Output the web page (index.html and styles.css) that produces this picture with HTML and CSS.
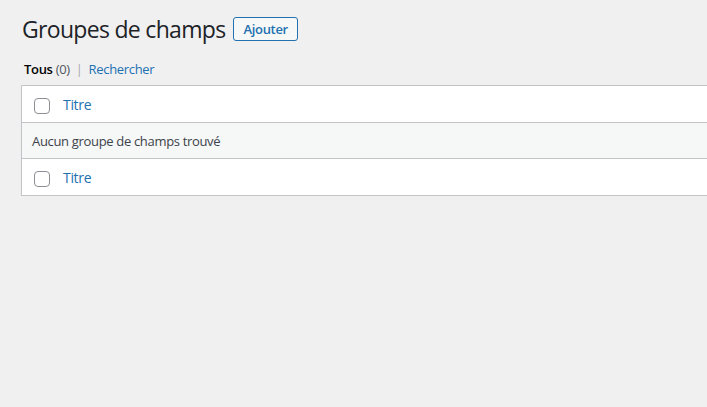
FILE: index.html
```html
<!DOCTYPE html>
<html lang="fr">
<head>
<meta charset="utf-8">
<title>Groupes de champs</title>
<link rel="stylesheet" href="styles.css">
</head>
<body>
<div class="wrap">
  <div class="heading">
    <h1 class="title">Groupes de champs</h1>
    <a class="add-btn" href="#">Ajouter</a>
  </div>
  <ul class="subsubsub">
    <li><a class="current" href="#">Tous <span class="count">(0)</span></a></li>
    <li class="sep">|</li>
    <li><a href="#">Rechercher</a></li>
  </ul>
  <div class="list-table">
    <div class="row head">
      <span class="cb"></span>
      <a class="col-title" href="#">Titre</a>
    </div>
    <div class="row empty">Aucun groupe de champs trouvé</div>
    <div class="row foot">
      <span class="cb"></span>
      <a class="col-title" href="#">Titre</a>
    </div>
  </div>
</div>
</body>
</html>
```
FILE: styles.css
```css
html, body {
  margin: 0;
  padding: 0;
  overflow: hidden;
  background: #f0f0f1;
  font-family: "Open Sans", "Noto Sans", sans-serif;
  letter-spacing: -0.025em;
  color: #3c434a;
  font-size: 13px;
}
.wrap {
  margin: 10px 0 0 22px;
}
.heading {
  display: flex;
  align-items: center;
  padding: 4px 0 4px;
}
.title {
  margin: 0;
  font-size: 23px;
  font-weight: 400;
  line-height: 30px;
  color: #1d2327;
  letter-spacing: -0.03em;
}
.add-btn {
  margin-left: 8px;
  border: 1px solid #2271b1;
  border-radius: 3px;
  background: #f6f7f7;
  color: #2271b1;
  font-size: 13px;
  font-weight: 600;
  line-height: 22px;
  padding: 0 9px;
  text-decoration: none;
}
.subsubsub {
  list-style: none;
  display: flex;
  gap: 6px;
  margin: 8px 0 0 2px;
  padding: 0;
  font-size: 13px;
  line-height: 26px;
  color: #646970;
}
.subsubsub a {
  color: #2271b1;
  text-decoration: none;
}
.subsubsub a.current {
  color: #000;
  font-weight: 600;
}
.subsubsub .count {
  color: #50575e;
  font-weight: 400;
}
.sep {
  color: #a7aaad;
}
.list-table {
  margin-top: 3px;
  margin-left: -1px;
  width: 720px;
  background: #fff;
  border: 1px solid #c3c4c7;
  box-shadow: 0 1px 1px rgba(0,0,0,0.04);
}
.row {
  display: flex;
  align-items: center;
  box-sizing: border-box;
}
.row.head {
  height: 37px;
  border-bottom: 1px solid #c3c4c7;
}
.row.foot {
  height: 37px;
  border-top: 1px solid #c3c4c7;
}
.row.empty {
  height: 35px;
  background: #f6f7f7;
  padding-left: 10px;
  color: #3c434a;
  font-size: 13px;
}
.cb {
  display: block;
  width: 14px;
  height: 14px;
  margin-left: 12px;
  margin-top: 3px;
  border: 1px solid #8c8f94;
  border-radius: 4px;
  background: #fff;
}
.col-title {
  margin-left: 13px;
  color: #2271b1;
  font-size: 14px;
  text-decoration: none;
}
```
